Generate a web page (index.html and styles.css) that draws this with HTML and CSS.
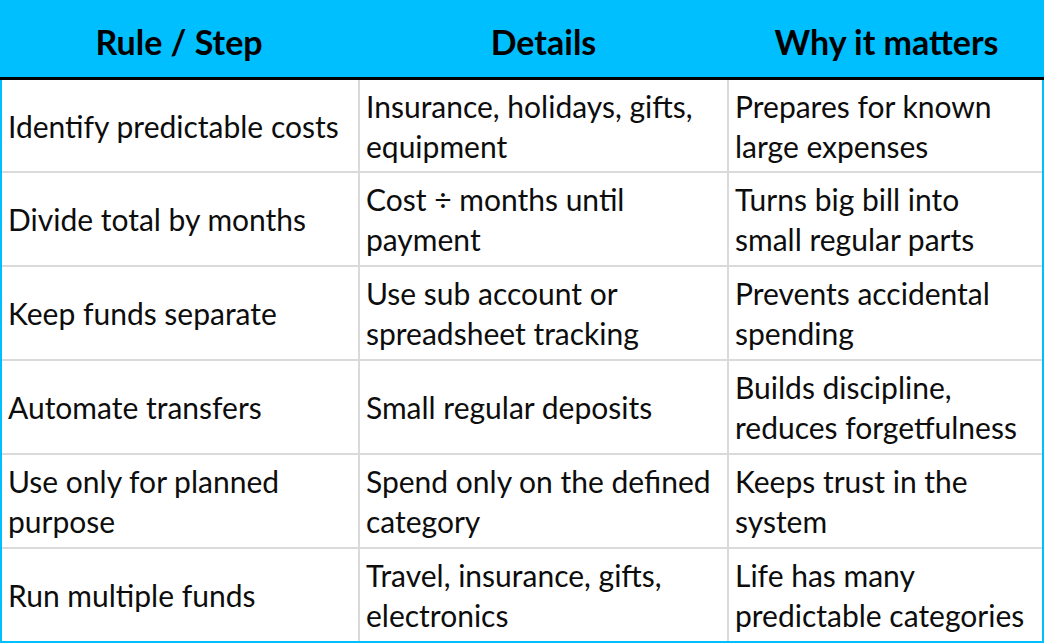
FILE: index.html
```html
<!DOCTYPE html>
<html lang="en">
<head>
<meta charset="utf-8">
<title>Sinking fund rules</title>
<link rel="stylesheet" href="styles.css">
</head>
<body>
<div class="table">
  <div class="head">
    <div class="th">Rule / Step</div>
    <div class="th">Details</div>
    <div class="th">Why it matters</div>
  </div>
  <div class="body">
    <div class="td">Identify predictable costs</div>
    <div class="td">Insurance, holidays, gifts, equipment</div>
    <div class="td">Prepares for known large expenses</div>

    <div class="td">Divide total by months</div>
    <div class="td">Cost ÷ months until payment</div>
    <div class="td">Turns big bill into small regular parts</div>

    <div class="td">Keep funds separate</div>
    <div class="td">Use sub account or spreadsheet tracking</div>
    <div class="td">Prevents accidental spending</div>

    <div class="td">Automate transfers</div>
    <div class="td">Small regular deposits</div>
    <div class="td">Builds discipline, reduces forgetfulness</div>

    <div class="td">Use only for planned purpose</div>
    <div class="td">Spend only on the defined category</div>
    <div class="td">Keeps trust in the system</div>

    <div class="td">Run multiple funds</div>
    <div class="td">Travel, insurance, gifts, electronics</div>
    <div class="td">Life has many predictable categories</div>
  </div>
</div>
</body>
</html>
```
FILE: styles.css
```css
html, body {
  margin: 0;
  padding: 0;
  background: #ffffff;
}

body {
  font-family: Lato, "Liberation Sans", sans-serif;
  color: #0d0d0d;
}

.table {
  width: 1044px;
}

.head {
  display: grid;
  grid-template-columns: 358px 371px 315px;
  height: 77px;
  background: #00bfff;
  border-bottom: 3px solid #000000;
}

.th {
  display: flex;
  align-items: center;
  justify-content: center;
  font-weight: 700;
  font-size: 34px;
  color: #000000;
  padding-top: 5px;
}

.body {
  display: grid;
  grid-template-columns: 356px 367px 313px;
  grid-template-rows: 91px repeat(5, 92px);
  gap: 2px;
  background: #dadada;
  border: 2px solid #00bfff;
  border-top: 0;
}

.td {
  background: #ffffff;
  display: flex;
  align-items: center;
  padding: 0 14px 0 6px;
  font-size: 30px;
  line-height: 40px;
}
```
